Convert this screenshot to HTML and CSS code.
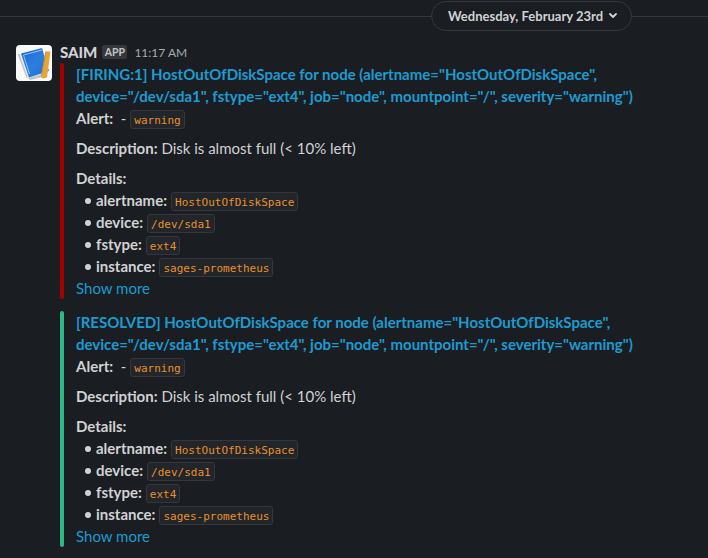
FILE: index.html
```html
<!DOCTYPE html>
<html lang="en">
<head>
<meta charset="utf-8">
<title>Alerts</title>
<link rel="stylesheet" href="styles.css">
</head>
<body>
<div class="divider">
  <span class="rule rule-left"></span>
  <div class="date">Wednesday, February 23rd
    <svg width="8" height="6" viewBox="0 0 8 6"><path d="M1 1l3 3 3-3" fill="none" stroke="currentColor" stroke-width="1.8" stroke-linecap="round" stroke-linejoin="round"/></svg>
  </div>
  <span class="rule rule-right"></span>
</div>
<div class="message">
  <svg class="avatar" width="36" height="36" viewBox="0 0 36 36">
    <defs><linearGradient id="cover" x1="0" y1="0" x2="1" y2="1"><stop offset="0" stop-color="#1d66c9"/><stop offset=".5" stop-color="#2b7fe0"/><stop offset="1" stop-color="#1f6fd6"/></linearGradient></defs>
    <rect width="36" height="36" rx="4" fill="#fafafa"/>
    <path d="M1.500 9l3 0 9 23-3 1z" fill="#c4c6ca"/>
    <path d="M3.500 9l1.500 0 8 23-1 1z" fill="#eeeeef"/>
    <path d="M12 33l14-4 1 3-13 3z" fill="#bfc2c8"/>
    <path d="M5 8.500L26 3l7 23-20 6.500z" fill="url(#cover)"/>
    <path d="M26 5L7.500 10l6 19" fill="none" stroke="#b5d5fb" stroke-width=".8"/>
    <path d="M29.500 6.500h5l-3.500 26-4.500 1-1.500-2z" fill="#e6a637"/>
    <path d="M30 6.500l-4.500 24" stroke="#c98a25" stroke-width=".8"/>
  </svg>
  <div class="body">
    <div class="head"><span class="name">SAIM</span><span class="app">APP</span><span class="time">11:17 AM</span></div>
    <div class="attachment firing">
      <div class="title">[FIRING:1] HostOutOfDiskSpace for node (alertname="HostOutOfDiskSpace",<br>device="/dev/sda1", fstype="ext4", job="node", mountpoint="/", severity="warning")</div>
      <p><b>Alert:</b>&nbsp; - <code>warning</code></p>
      <p class="spaced"><b>Description:</b> Disk is almost full (&lt; 10% left)</p>
      <p class="spaced"><b>Details:</b></p>
      <ul>
        <li><b>alertname:</b> <code>HostOutOfDiskSpace</code></li>
        <li><b>device:</b> <code>/dev/sda1</code></li>
        <li><b>fstype:</b> <code>ext4</code></li>
        <li><b>instance:</b> <code>sages-prometheus</code></li>
      </ul>
      <a class="more">Show more</a>
    </div>
    <div class="attachment resolved">
      <div class="title">[RESOLVED] HostOutOfDiskSpace for node (alertname="HostOutOfDiskSpace",<br>device="/dev/sda1", fstype="ext4", job="node", mountpoint="/", severity="warning")</div>
      <p><b>Alert:</b>&nbsp; - <code>warning</code></p>
      <p class="spaced"><b>Description:</b> Disk is almost full (&lt; 10% left)</p>
      <p class="spaced"><b>Details:</b></p>
      <ul>
        <li><b>alertname:</b> <code>HostOutOfDiskSpace</code></li>
        <li><b>device:</b> <code>/dev/sda1</code></li>
        <li><b>fstype:</b> <code>ext4</code></li>
        <li><b>instance:</b> <code>sages-prometheus</code></li>
      </ul>
      <a class="more">Show more</a>
    </div>
  </div>
</div>
</body>
</html>
```
FILE: styles.css
```css
* { box-sizing: border-box; }
body {
  margin: 0;
  height: 558px;
  overflow: hidden;
  background: #1a1d21;
  color: #d1d2d3;
  font: 15px/22px Lato, sans-serif;
}
.divider { display: flex; align-items: center; height: 31px; padding-top: 1px; }
.rule { height: 1px; margin-top: 1px; background: #35373b; }
.rule-left { width: 431px; }
.rule-right { flex: 1; }
.date {
  display: flex;
  align-items: center;
  gap: 6px;
  width: 201px;
  height: 30px;
  padding-left: 16px;
  border: 1px solid #35373b;
  border-radius: 15px;
  font-size: 13px;
  font-weight: 700;
  white-space: nowrap;
}
.message { display: flex; gap: 8px; padding: 10px 0 0 16px; }
.avatar { display: block; flex: none; margin-top: 4px; }
.head { display: flex; align-items: center; height: 22px; }
.name { font-weight: 900; }
.app {
  width: 25px;
  height: 14px;
  margin: 0 7px 0 5px;
  border-radius: 2px;
  background: #35373b;
  color: #c4c5c6;
  font-size: 10.5px;
  font-weight: 700;
  line-height: 14px;
  text-align: center;
}
.time { color: #ababad; font-size: 12px; padding-top: 2px; }
.attachment {
  position: relative;
  height: 236px;
  margin-bottom: 12px;
  padding-left: 16px;
  white-space: nowrap;
}
.attachment::before {
  content: "";
  position: absolute;
  left: 0;
  top: 0;
  width: 4px;
  height: 100%;
  border-radius: 2px;
}
.firing::before { background: #a30200; }
.resolved::before { background: #2eb886; }
.title { color: #1d9bd1; font-weight: 700; }
p { margin: 0; height: 22px; }
.spaced { margin-top: 8px; }
b { font-weight: 700; }
code {
  display: inline-block;
  height: 19px;
  margin-top: 2px;
  padding: 1px 3px 0;
  border: 1px solid #35373b;
  border-radius: 3px;
  background: #222529;
  color: #e8912d;
  font: 11px/17px "DejaVu Sans Mono", monospace;
  vertical-align: top;
}
p code { margin-top: 3px; }
ul { margin: 0; padding: 0; list-style: none; }
li { display: flex; align-items: center; gap: 4px; height: 22px; padding-left: 9px; }
li::before { content: ""; width: 6px; height: 6px; margin: 2px 1px 0 0; border-radius: 50%; background: #d1d2d3; }
.more { display: block; color: #1d9bd1; }
```
